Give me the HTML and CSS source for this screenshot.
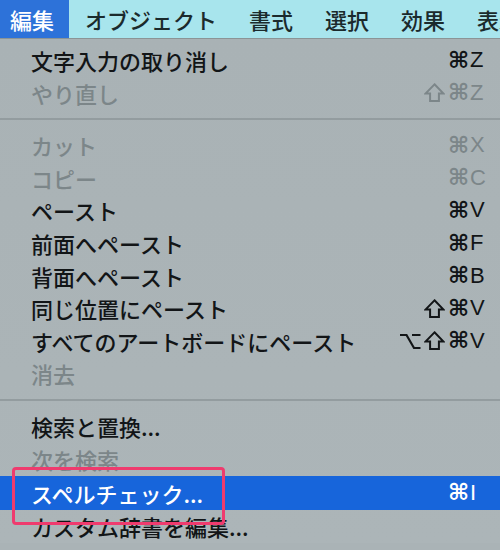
FILE: index.html
```html
<!DOCTYPE html>
<html lang="ja">
<head>
<meta charset="utf-8">
<title>編集メニュー</title>
<link rel="stylesheet" href="styles.css">
</head>
<body>
<div class="screen">
  <div class="menubar">
    <span class="mb-item active">編集</span>
    <span class="mb-item">オブジェクト</span>
    <span class="mb-item">書式</span>
    <span class="mb-item">選択</span>
    <span class="mb-item">効果</span>
    <span class="mb-item">表示</span>
  </div>
  <div class="menu">
    <div class="item"><span class="label">文字入力の取り消し</span><span class="key"><span class="cmd">⌘</span><span class="letter">Z</span></span></div>
    <div class="item disabled"><span class="label">やり直し</span><span class="key"><svg class="shift" viewBox="0 0 20 20"><path d="M10 2.2 L18.6 11 H14.2 V18 H5.8 V11 H1.4 Z"/></svg><span class="cmd">⌘</span><span class="letter">Z</span></span></div>
    <div class="sep"></div>
    <div class="item disabled"><span class="label">カット</span><span class="key"><span class="cmd">⌘</span><span class="letter">X</span></span></div>
    <div class="item disabled"><span class="label">コピー</span><span class="key"><span class="cmd">⌘</span><span class="letter">C</span></span></div>
    <div class="item"><span class="label">ペースト</span><span class="key"><span class="cmd">⌘</span><span class="letter">V</span></span></div>
    <div class="item"><span class="label">前面へペースト</span><span class="key"><span class="cmd">⌘</span><span class="letter">F</span></span></div>
    <div class="item"><span class="label">背面へペースト</span><span class="key"><span class="cmd">⌘</span><span class="letter">B</span></span></div>
    <div class="item"><span class="label">同じ位置にペースト</span><span class="key"><svg class="shift" viewBox="0 0 20 20"><path d="M10 2.2 L18.6 11 H14.2 V18 H5.8 V11 H1.4 Z"/></svg><span class="cmd">⌘</span><span class="letter">V</span></span></div>
    <div class="item"><span class="label">すべてのアートボードにペースト</span><span class="key"><svg class="opt" viewBox="0 0 22 20"><path d="M1 4 H7.5 L15 17 H21.5 M13 4 H21.5"/></svg><svg class="shift" viewBox="0 0 20 20"><path d="M10 2.2 L18.6 11 H14.2 V18 H5.8 V11 H1.4 Z"/></svg><span class="cmd">⌘</span><span class="letter">V</span></span></div>
    <div class="item disabled"><span class="label">消去</span></div>
    <div class="sep"></div>
    <div class="item"><span class="label">検索と置換...</span></div>
    <div class="item disabled"><span class="label">次を検索</span></div>
    <div class="item selected"><span class="label">スペルチェック...</span><span class="key"><span class="cmd">⌘</span><span class="letter">I</span></span></div>
    <div class="item"><span class="label">カスタム辞書を編集...</span></div>
  </div>
  <div class="callout"></div>
</div>
</body>
</html>
```

FILE: styles.css
```css
html, body {
  margin: 0;
  padding: 0;
}

body {
  width: 500px;
  height: 550px;
  overflow: hidden;
  font-family: "Noto Sans CJK JP", "Noto Sans", sans-serif;
}

.screen {
  position: relative;
  width: 500px;
  height: 550px;
  overflow: hidden;
  background: #aab3b6;
}

.menubar {
  display: flex;
  height: 38px;
  background: #a8e5ed;
  border-bottom: 1px solid #8b9496;
  white-space: nowrap;
}

.mb-item {
  display: flex;
  align-items: center;
  padding: 0 16px;
  font-size: 22px;
  font-weight: 500;
  line-height: 1;
  color: #1b2a2c;
}

.mb-item:first-child {
  padding-left: 10px;
  padding-right: 15px;
}

.mb-item.active {
  background: #2d72d9;
  color: #ffffff;
}

.menu {
  padding-top: 4.8px;
  background: linear-gradient(180deg, #a9b2b5 0%, #acb5b8 100%);
}

.item {
  display: flex;
  align-items: center;
  justify-content: space-between;
  height: 32.6px;
  padding: 0 15px 0 31px;
  font-size: 22px;
  font-weight: 500;
  line-height: 1;
  color: #121517;
  white-space: nowrap;
}

.item.disabled {
  color: #7c8689;
}

.item.selected {
  height: 34px;
  margin-top: 1px;
  background: #1765db;
  color: #ffffff;
}

.key {
  display: flex;
  align-items: center;
  gap: 3px;
  font-family: "Liberation Sans", "DejaVu Sans", sans-serif;
  font-size: 22px;
  font-weight: 400;
}

.cmd {
  width: 20px;
  text-align: center;
  font-family: "DejaVu Sans", sans-serif;
  font-size: 23px;
  font-weight: 700;
}

.letter {
  width: 15px;
  margin-left: -1px;
  text-align: left;
}

.shift {
  width: 21px;
  height: 21px;
  fill: none;
  stroke: currentColor;
  stroke-width: 1.9;
  stroke-linejoin: miter;
}

.opt {
  width: 22px;
  height: 20px;
  fill: none;
  stroke: currentColor;
  stroke-width: 2.2;
}

.sep {
  height: 2px;
  margin: 9px 0;
  background: #939c9f;
}

.callout {
  position: absolute;
  left: 12px;
  top: 467px;
  width: 213px;
  height: 58px;
  box-sizing: border-box;
  border: 3px solid #ef3b6e;
  border-radius: 4px;
}
```
